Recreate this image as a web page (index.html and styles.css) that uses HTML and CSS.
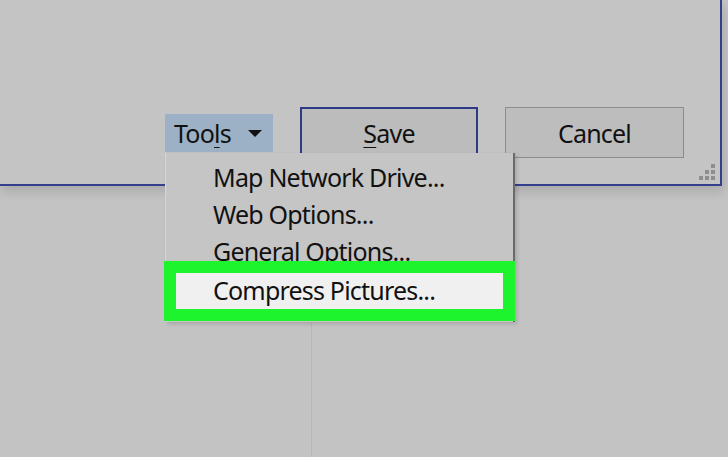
FILE: index.html
```html
<!DOCTYPE html>
<html>
<head>
    <link rel="stylesheet" href="styles.css">
</head>
<body>
    <div class="dialog">
        <div class="buttons">
            <div class="btn tools">Too<u>l</u>s <span class="caret"></span></div>
            <div class="btn save"><u>S</u>ave</div>
            <div class="btn cancel">Cancel</div>
        </div>
        <div class="grip">
            <span></span><span></span><span></span><span></span><span></span><span></span>
        </div>
        <ul class="menu">
            <li>Map Network Drive...</li>
            <li>Web Options...</li>
            <li>General Options...</li>
            <li class="active">Compress Pictures...</li>
        </ul>
    </div>
    <div class="below"></div>
</body>
</html>
```

FILE: styles.css
```css
body {
    margin: 0;
    width: 728px;
    height: 457px;
    overflow: hidden;
    background-color: #c3c3c3;
    font-family: "Noto Sans", sans-serif;
    color: #111;
    letter-spacing: -0.8px;
}
.dialog {
    position: relative;
    width: 720px;
    height: 184px;
    border-right: 2px solid #34408e;
    border-bottom: 2px solid #34408e;
    background-color: #c4c4c4;
    box-shadow: 2px 6px 10px rgba(0,0,0,0.12);
}
.buttons {
    display: flex;
    align-items: flex-start;
    padding: 107px 0 0 165px;
    gap: 27px;
}
.btn {
    box-sizing: border-box;
    display: flex;
    align-items: center;
    justify-content: center;
    font-size: 25px;
}
.tools {
    margin-top: 7px;
    width: 108px;
    height: 38px;
    background-color: #9cb1c5;
    justify-content: flex-start;
    padding-left: 9px;
}
.tools u, .save u {
    text-underline-offset: 4px;
    text-decoration-thickness: 1px;
}
.caret {
    margin-left: 17px;
    width: 0;
    height: 0;
    border-left: 7px solid transparent;
    border-right: 7px solid transparent;
    border-top: 7px solid #111;
}
.save {
    width: 178px;
    height: 51px;
    border: 2px solid #2f3a86;
    background-color: #bcbcbc;
}
.cancel {
    width: 179px;
    height: 51px;
    border: 1px solid #8c8c8c;
    background-color: #bdbdbd;
}
.grip {
    position: absolute;
    right: 5px;
    bottom: 4px;
    display: grid;
    grid-template-columns: repeat(3, 4px);
    grid-template-rows: repeat(3, 4px);
    gap: 2px;
}
.grip span {
    background-color: #8e8e8e;
}
.grip span:nth-child(1) { grid-area: 1 / 3; }
.grip span:nth-child(2) { grid-area: 2 / 2; }
.grip span:nth-child(3) { grid-area: 2 / 3; }
.grip span:nth-child(4) { grid-area: 3 / 1; }
.grip span:nth-child(5) { grid-area: 3 / 2; }
.grip span:nth-child(6) { grid-area: 3 / 3; }
.menu {
    position: absolute;
    left: 165px;
    top: 153px;
    z-index: 2;
    width: 350px;
    box-sizing: border-box;
    margin: 0;
    padding: 6px 0 13px;
    list-style: none;
    background-color: #c5c5c5;
    border-left: 1px solid #d6d6d6;
    border-right: 2px solid #6a6a6a;
    box-shadow: 2px 2px 4px rgba(0,0,0,0.15);
}
.menu li {
    height: 37px;
    line-height: 36px;
    padding-left: 47px;
    font-size: 25px;
}
.menu li.active {
    margin: 3px 10px 0 10px;
    padding-left: 37px;
    height: 36px;
    line-height: 34px;
    background-color: #f0f0f0;
    outline: 12px solid #1ef42e;
}
.below {
    margin-left: 311px;
    height: 271px;
    border-left: 1px solid #b7b7b7;
}
```
